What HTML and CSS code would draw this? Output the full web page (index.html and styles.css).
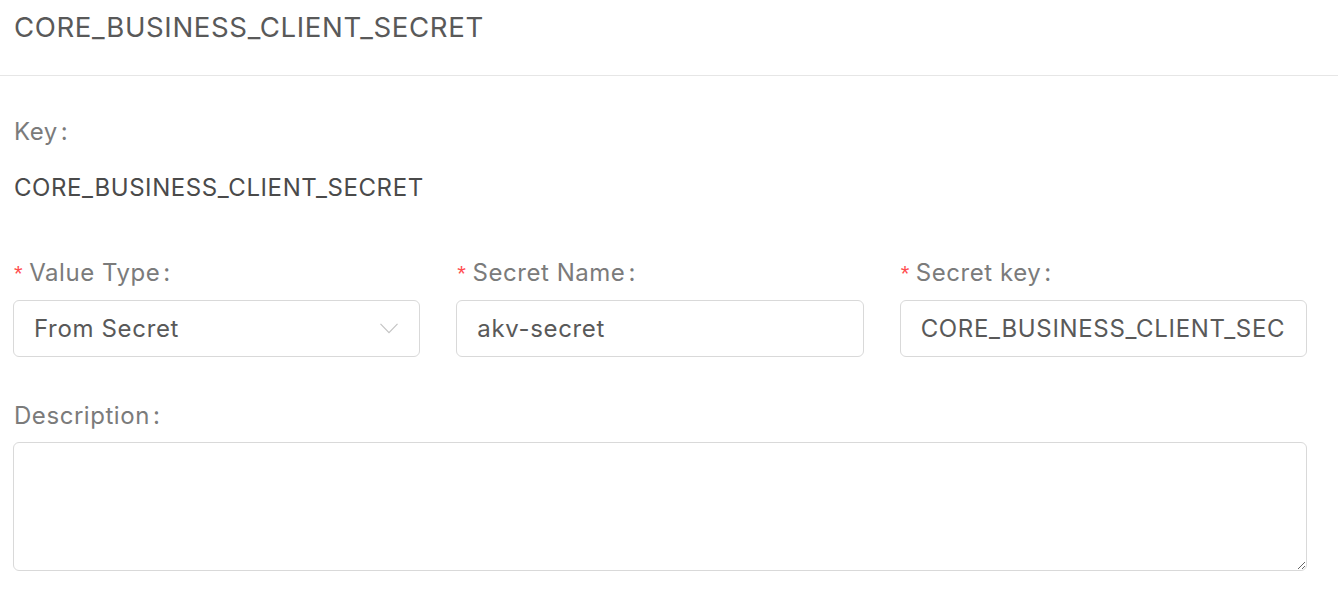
FILE: index.html
```html
<!DOCTYPE html>
<html lang="en">
<head>
<meta charset="utf-8">
<title>CORE_BUSINESS_CLIENT_SECRET</title>
<link rel="stylesheet" href="styles.css">
</head>
<body>
<div class="panel">
  <header class="panel-header">
    <h1 class="panel-title">CORE_BUSINESS_CLIENT_SECRET</h1>
  </header>
  <form class="panel-body">
    <div class="field field-key">
      <div class="label">Key<span class="colon">:</span></div>
      <div class="static-value">CORE_BUSINESS_CLIENT_SECRET</div>
    </div>
    <div class="row">
      <div class="field">
        <label class="label"><span class="req">*</span>Value Type<span class="colon">:</span></label>
        <div class="select">
          <span class="select-value">From Secret</span>
          <svg class="chevron" width="18" height="11" viewBox="0 0 18 11" aria-hidden="true">
            <path d="M0.5 0.8 L9 9.6 L17.5 0.8" fill="none" stroke="#c4c4c4" stroke-width="1.2"/>
          </svg>
        </div>
      </div>
      <div class="field">
        <label class="label"><span class="req">*</span>Secret Name<span class="colon">:</span></label>
        <input class="input" type="text" value="akv-secret">
      </div>
      <div class="field">
        <label class="label"><span class="req">*</span>Secret key<span class="colon">:</span></label>
        <input class="input" type="text" value="CORE_BUSINESS_CLIENT_SECRET">
      </div>
    </div>
    <div class="field field-desc">
      <label class="label">Description<span class="colon">:</span></label>
      <textarea class="textarea"></textarea>
    </div>
  </form>
</div>
</body>
</html>
```

FILE: styles.css
```css
* { box-sizing: border-box; }

html, body {
  margin: 0;
  padding: 0;
  background: #ffffff;
  font-family: Inter, "Noto Sans", "Liberation Sans", sans-serif;
}

.panel {
  width: 1338px;
}

.panel-header {
  height: 76px;
  padding: 7px 14px 0 14px;
  border-bottom: 1px solid #e6e6e6;
}

.panel-title {
  margin: 0;
  font-size: 27.6px;
  line-height: 41px;
  font-weight: 400;
  letter-spacing: 0.62px;
  color: #595959;
}

.panel-body {
  padding: 36px 31px 0 13px;
  display: flex;
  flex-direction: column;
}

.label {
  display: block;
  font-size: 24px;
  line-height: 36px;
  padding-top: 2px;
  letter-spacing: 0.55px;
  color: #7b7b7b;
  padding-left: 1px;
}

.req {
  color: #ff4d4f;
  font-size: 22px;
  margin-right: 6px;
  font-family: "Liberation Sans", sans-serif;
}

.colon {
  margin-left: 3px;
}

.static-value {
  margin-top: 20px;
  padding-left: 1px;
  font-size: 24px;
  line-height: 36px;
  letter-spacing: 0.58px;
  color: #4a4a4a;
}

.row {
  margin-top: 47px;
  display: grid;
  grid-template-columns: repeat(3, 1fr);
  column-gap: 36px;
}

.select,
.input {
  margin-top: 8px;
  height: 57px;
  width: 100%;
  border: 1px solid #d9d9d9;
  border-radius: 6px;
  background: #fff;
  font-family: inherit;
  font-size: 24px;
  letter-spacing: 0.66px;
  color: #595959;
  padding: 0 22px 0 20px;
}

.select {
  display: flex;
  align-items: center;
  justify-content: space-between;
  padding-right: 20px;
}

.chevron {
  display: block;
  margin-right: 1px;
}

.input {
  outline: none;
  display: block;
}

.field-desc {
  margin-top: 39px;
}

.textarea {
  display: block;
  margin-top: 8px;
  width: 100%;
  height: 129px;
  border: 1px solid #d9d9d9;
  border-radius: 6px;
  resize: vertical;
  font-family: inherit;
  font-size: 24px;
  color: #595959;
  padding: 8px 20px;
  outline: none;
}
```
